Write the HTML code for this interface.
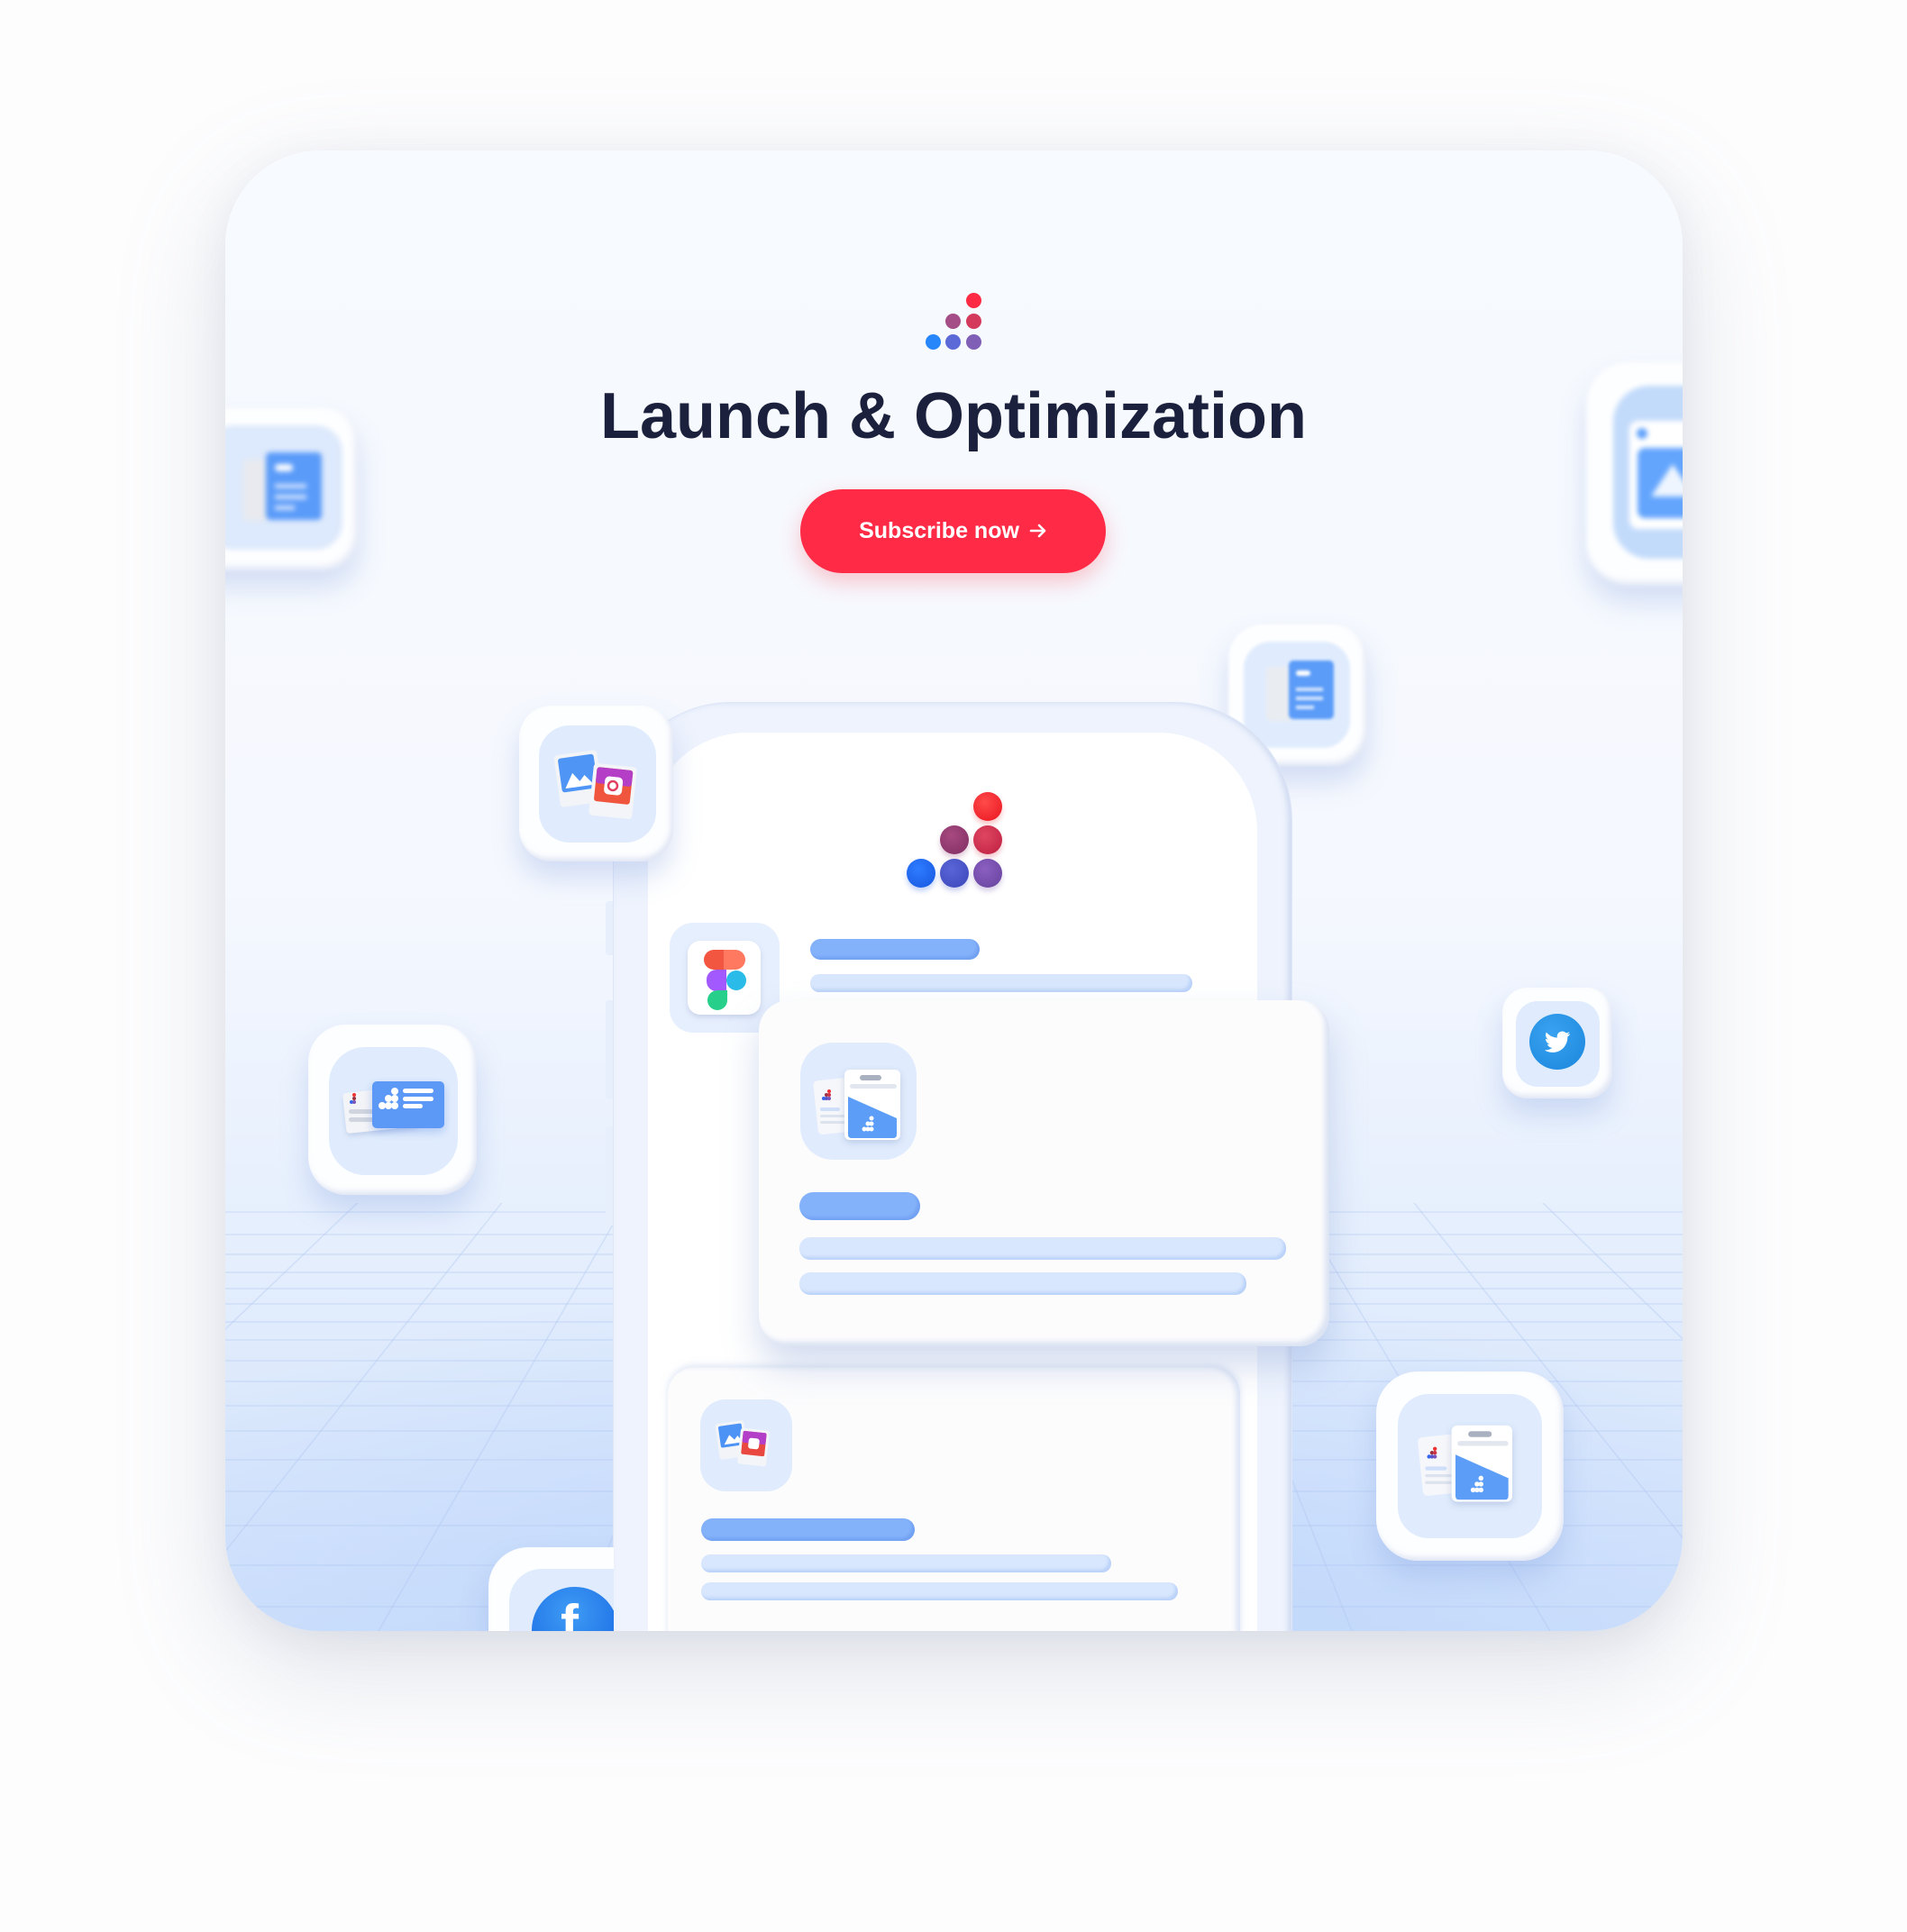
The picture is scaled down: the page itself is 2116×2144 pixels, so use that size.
<!DOCTYPE html>
<html><head><meta charset="utf-8">
<style>
*{margin:0;padding:0;box-sizing:border-box}
html,body{width:2116px;height:2144px;background:#fdfdfe;overflow:hidden;font-family:"Liberation Sans",sans-serif}
.abs{position:absolute}
#card{position:absolute;left:250px;top:167px;width:1617px;height:1643px;border-radius:105px;overflow:hidden;
 background:linear-gradient(180deg,#f7fafe 0%,#f5f8fe 50%,#e4eefd 75%,#cfe0fb 100%);
 box-shadow:0 40px 120px rgba(120,130,160,.22),0 10px 40px rgba(120,130,160,.10)}
#in{position:absolute;left:-250px;top:-167px;width:2116px;height:2144px}
.tile{position:absolute;background:#fdfeff;border-radius:38px;box-shadow:0 18px 30px rgba(120,150,220,.28),inset -3px -4px 6px rgba(200,210,235,.5)}
.inner{position:absolute;background:#e0ecfd;border-radius:30px}
.bar{position:absolute;border-radius:14px;background:#84b2fa;box-shadow:inset -3px -3px 3px rgba(80,130,230,.35)}
.lbar{position:absolute;border-radius:12px;background:#d8e7fd;box-shadow:inset -3px -3px 3px rgba(150,185,245,.45)}
.dot{position:absolute;border-radius:50%}
</style></head><body>
<div id="card"><div id="in">
<!-- grid -->
<svg class="abs" style="left:0;top:0" width="2116" height="2144">
<defs><radialGradient id="g1" cx="0.5" cy="1" r="0.7"><stop offset="0" stop-color="#bcd5fb" stop-opacity=".9"/><stop offset="1" stop-color="#bcd5fb" stop-opacity="0"/></radialGradient>
<clipPath id="cp"><rect x="250" y="1335" width="1617" height="480"/></clipPath></defs>
<rect x="250" y="1250" width="1617" height="560" fill="url(#g1)"/>
<g stroke="#a9c2ee" stroke-opacity=".32" stroke-width="1.6" fill="none" clip-path="url(#cp)">
<line x1="250" y1="1345" x2="1867" y2="1345"/><line x1="250" y1="1370" x2="1867" y2="1370"/><line x1="250" y1="1392" x2="1867" y2="1392"/><line x1="250" y1="1412" x2="1867" y2="1412"/><line x1="250" y1="1430" x2="1867" y2="1430"/><line x1="250" y1="1447" x2="1867" y2="1447"/><line x1="250" y1="1467" x2="1867" y2="1467"/><line x1="250" y1="1487" x2="1867" y2="1487"/><line x1="250" y1="1510" x2="1867" y2="1510"/><line x1="250" y1="1533" x2="1867" y2="1533"/><line x1="250" y1="1560" x2="1867" y2="1560"/><line x1="250" y1="1588" x2="1867" y2="1588"/><line x1="250" y1="1620" x2="1867" y2="1620"/><line x1="250" y1="1655" x2="1867" y2="1655"/><line x1="250" y1="1693" x2="1867" y2="1693"/><line x1="250" y1="1737" x2="1867" y2="1737"/><line x1="250" y1="1783" x2="1867" y2="1783"/>
<line x1="1060" y1="700" x2="-400" y2="1810"/><line x1="1060" y1="700" x2="-100" y2="1810"/><line x1="1060" y1="700" x2="180" y2="1810"/><line x1="1060" y1="700" x2="420" y2="1810"/><line x1="1060" y1="700" x2="640" y2="1810"/>
<line x1="1060" y1="700" x2="2500" y2="1810"/><line x1="1060" y1="700" x2="2200" y2="1810"/><line x1="1060" y1="700" x2="1950" y2="1810"/><line x1="1060" y1="700" x2="1720" y2="1810"/><line x1="1060" y1="700" x2="1500" y2="1810"/>
</g></svg>

<!-- logo -->
<div class="dot" style="left:1072px;top:325px;width:17px;height:17px;background:#ff2b44"></div>
<div class="dot" style="left:1049px;top:348px;width:17px;height:17px;background:#a54d86"></div>
<div class="dot" style="left:1072px;top:348px;width:17px;height:17px;background:#d43a5c"></div>
<div class="dot" style="left:1027px;top:371px;width:17px;height:17px;background:#2886fb"></div>
<div class="dot" style="left:1049px;top:371px;width:17px;height:17px;background:#5c6ad8"></div>
<div class="dot" style="left:1072px;top:371px;width:17px;height:17px;background:#805fb6"></div>

<div class="abs" style="left:558px;top:426px;width:1000px;text-align:center;font-size:72px;line-height:72px;font-weight:bold;color:#1b213d">Launch &amp; Optimization</div>

<div class="abs" style="left:888px;top:543px;width:339px;height:93px;border-radius:47px;background:#ff2b46;box-shadow:0 10px 24px rgba(255,60,80,.28);color:#fff;font-weight:bold;font-size:25px;line-height:93px;text-align:center">Subscribe now <svg width="20" height="20" viewBox="0 0 20 20" style="vertical-align:-2px;margin-left:4px"><path d="M2 10H17M11 4L17 10L11 16" stroke="#fff" stroke-width="2.6" fill="none" stroke-linecap="round" stroke-linejoin="round"/></svg></div>

<!-- blurred top-left tile -->
<div style="filter:blur(3px)">
<div class="tile" style="left:200px;top:453px;width:197px;height:180px"></div>
<div class="inner" style="left:230px;top:472px;width:150px;height:138px;background:#dde9fc"></div>
<div class="abs" style="left:270px;top:510px;width:30px;height:68px;background:#e8eaef;border-radius:5px"></div>
<div class="abs" style="left:295px;top:502px;width:62px;height:75px;background:#5a9bf9;border-radius:5px"></div>
<div class="abs" style="left:305px;top:515px;width:20px;height:8px;background:#fff;border-radius:4px"></div>
<div class="abs" style="left:305px;top:537px;width:35px;height:5px;background:#cfe0fd"></div>
<div class="abs" style="left:305px;top:549px;width:35px;height:5px;background:#cfe0fd"></div>
<div class="abs" style="left:305px;top:561px;width:22px;height:5px;background:#cfe0fd"></div>
</div>
<!-- blurred top-right tile -->
<div style="filter:blur(3px)">
<div class="tile" style="left:1760px;top:402px;width:220px;height:248px;border-radius:48px"></div>
<div class="inner" style="left:1790px;top:428px;width:200px;height:192px;background:#c3dbfb;border-radius:40px"></div>
<div class="abs" style="left:1808px;top:467px;width:120px;height:120px;background:#fff;border-radius:10px"></div>
<div class="dot" style="left:1816px;top:475px;width:12px;height:12px;background:#5fa0fc"></div>
<div class="abs" style="left:1817px;top:497px;width:100px;height:78px;background:#63a5fd;border-radius:8px"></div>
<div class="abs" style="left:1832px;top:515px;width:0;height:0;border-left:24px solid transparent;border-right:24px solid transparent;border-bottom:36px solid #eef5ff"></div>
</div>
<!-- doc tile behind phone -->
<div style="filter:blur(1.5px)">
<div class="tile" style="left:1363px;top:693px;width:154px;height:157px"></div>
<div class="inner" style="left:1380px;top:712px;width:118px;height:118px"></div>
<div class="abs" style="left:1405px;top:740px;width:30px;height:60px;background:#e9ecf1;border-radius:5px"></div>
<div class="abs" style="left:1430px;top:733px;width:50px;height:65px;background:#5b9cf8;border-radius:5px"></div>
<div class="abs" style="left:1438px;top:744px;width:16px;height:6px;background:#fff;border-radius:3px"></div>
<div class="abs" style="left:1438px;top:763px;width:30px;height:4px;background:#d6e6fd"></div>
<div class="abs" style="left:1438px;top:773px;width:30px;height:4px;background:#d6e6fd"></div>
<div class="abs" style="left:1438px;top:783px;width:20px;height:4px;background:#d6e6fd"></div>
</div>

<!-- phone -->
<div class="abs" style="left:672px;top:1000px;width:12px;height:60px;background:#e8effc;border-radius:4px"></div>
<div class="abs" style="left:672px;top:1110px;width:12px;height:110px;background:#e8effc;border-radius:4px"></div>
<div class="abs" style="left:672px;top:1250px;width:12px;height:110px;background:#e8effc;border-radius:4px"></div>
<div class="abs" style="left:681px;top:780px;width:752px;height:1200px;border-radius:130px;background:#eef3fd;box-shadow:0 0 0 1px #dfe7f7,inset -4px 0 6px rgba(190,205,235,.6)"></div>
<div class="abs" style="left:719px;top:813px;width:676px;height:1200px;border-radius:110px 110px 0 0;background:#fff"></div>

<!-- big logo -->
<div class="dot" style="left:1080px;top:879px;width:32px;height:32px;background:radial-gradient(circle at 40% 35%,#ff4a4a,#e8141f);box-shadow:0 4px 6px rgba(230,20,30,.25)"></div>
<div class="dot" style="left:1043px;top:916px;width:32px;height:32px;background:radial-gradient(circle at 40% 35%,#a74a80,#7f2d62);box-shadow:0 4px 6px rgba(130,40,100,.25)"></div>
<div class="dot" style="left:1080px;top:916px;width:32px;height:32px;background:radial-gradient(circle at 40% 35%,#df4561,#bd1f3f);box-shadow:0 4px 6px rgba(200,30,60,.25)"></div>
<div class="dot" style="left:1006px;top:953px;width:32px;height:32px;background:radial-gradient(circle at 40% 35%,#2f7cff,#1456e0);box-shadow:0 4px 6px rgba(20,80,230,.25)"></div>
<div class="dot" style="left:1043px;top:953px;width:32px;height:32px;background:radial-gradient(circle at 40% 35%,#5a66d8,#3b46b8);box-shadow:0 4px 6px rgba(60,70,190,.25)"></div>
<div class="dot" style="left:1080px;top:953px;width:32px;height:32px;background:radial-gradient(circle at 40% 35%,#8a5fc0,#66409c);box-shadow:0 4px 6px rgba(100,60,160,.25)"></div>

<!-- figma row -->
<div class="inner" style="left:743px;top:1024px;width:122px;height:122px;border-radius:26px;background:#e6effd"></div>
<div class="abs" style="left:763px;top:1044px;width:81px;height:82px;border-radius:14px;background:#fff;box-shadow:0 3px 6px rgba(150,160,200,.35)"></div>
<div class="abs" style="left:781px;top:1054px;width:24px;height:22px;border-radius:11px 0 0 11px;background:#f25640"></div>
<div class="abs" style="left:803px;top:1054px;width:24px;height:22px;border-radius:0 11px 11px 0;background:#ff7860"></div>
<div class="abs" style="left:784px;top:1076px;width:22px;height:24px;border-radius:11px 0 0 11px;background:#a259ff"></div>
<div class="dot" style="left:806px;top:1077px;width:22px;height:22px;background:#2bbbe8"></div>
<div class="abs" style="left:785px;top:1099px;width:22px;height:22px;border-radius:11px 0 11px 11px;background:#26d08a"></div>
<div class="bar" style="left:899px;top:1042px;width:188px;height:23px"></div>
<div class="lbar" style="left:899px;top:1081px;width:424px;height:20px"></div>

<!-- bottom card in phone -->
<div class="abs" style="left:741px;top:1517px;width:635px;height:400px;border-radius:30px;background:#fcfcfd;box-shadow:0 -2px 8px rgba(190,205,235,.5),inset -5px 0 6px rgba(215,225,245,.8)"></div>
<div class="inner" style="left:777px;top:1553px;width:102px;height:102px;border-radius:28px"></div>
<svg class="abs" style="left:790px;top:1570px" width="80" height="70" viewBox="0 0 80 70">
<rect x="6" y="8" width="32" height="40" rx="3" fill="#f2f4f8" transform="rotate(-8 22 28)"/>
<rect x="9" y="11" width="26" height="24" rx="2" fill="#4d92f5" transform="rotate(-8 22 28)"/>
<path d="M13 32 L20 22 L25 28 L29 24 L34 32 Z" fill="#fff" transform="rotate(-8 22 28)"/>
<rect x="30" y="16" width="32" height="40" rx="3" fill="#f4f5f8" transform="rotate(6 46 36)"/>
<rect x="33" y="19" width="26" height="26" rx="2" fill="#e8483f" transform="rotate(6 46 36)"/>
<rect x="33" y="19" width="26" height="13" rx="2" fill="#b33fc9" transform="rotate(6 46 36)"/>
<rect x="40" y="26" width="12" height="12" rx="3" fill="#fff" transform="rotate(6 46 36)"/>
</svg>
<div class="bar" style="left:778px;top:1685px;width:237px;height:25px"></div>
<div class="lbar" style="left:778px;top:1725px;width:455px;height:20px"></div>
<div class="lbar" style="left:778px;top:1756px;width:529px;height:20px"></div>

<!-- front card -->
<div class="abs" style="left:842px;top:1110px;width:633px;height:384px;border-radius:34px;background:#fcfcfd;box-shadow:0 22px 40px rgba(130,155,210,.35),inset -5px -5px 6px rgba(210,220,240,.8)"></div>
<div class="inner" style="left:888px;top:1157px;width:129px;height:130px;border-radius:36px"></div>
<svg class="abs" style="left:895px;top:1175px" width="115" height="100" viewBox="0 0 115 100">
<rect x="10" y="22" width="50" height="60" rx="5" fill="#f6f7fa" transform="rotate(-6 35 52)"/>
<circle cx="25" cy="36" r="2" fill="#e33"/><circle cx="22" cy="40" r="2" fill="#934"/><circle cx="25" cy="40" r="2" fill="#c34"/>
<circle cx="19" cy="44" r="2" fill="#36e"/><circle cx="22" cy="44" r="2" fill="#55c"/><circle cx="25" cy="44" r="2" fill="#75b"/>
<rect x="15" y="54" width="22" height="4" rx="2" fill="#cfdffa"/><rect x="15" y="62" width="28" height="3" rx="1.5" fill="#dde3ee"/><rect x="15" y="69" width="28" height="3" rx="1.5" fill="#dde3ee"/>
<rect x="42" y="12" width="62" height="78" rx="6" fill="#fff" style="filter:drop-shadow(0 3px 4px rgba(120,140,190,.35))"/>
<rect x="59" y="18" width="24" height="6" rx="3" fill="#a9b1c0"/>
<rect x="48" y="28" width="52" height="5" rx="2.5" fill="#e2e6ee"/>
<path d="M46 42 L100 66 L100 84 Q100 88 96 88 L50 88 Q46 88 46 84 Z" fill="#5c9df7"/>
<circle cx="72" cy="66" r="2.5" fill="#fff"/><circle cx="68" cy="72" r="2.5" fill="#fff"/><circle cx="72" cy="72" r="2.5" fill="#fff"/><circle cx="64" cy="78" r="2.5" fill="#fff"/><circle cx="68" cy="78" r="2.5" fill="#fff"/><circle cx="72" cy="78" r="2.5" fill="#fff"/>
</svg>
<div class="bar" style="left:887px;top:1323px;width:134px;height:31px;border-radius:16px"></div>
<div class="lbar" style="left:887px;top:1373px;width:540px;height:25px"></div>
<div class="lbar" style="left:887px;top:1412px;width:496px;height:25px"></div>

<!-- instagram tile -->
<div class="tile" style="left:576px;top:783px;width:171px;height:173px;border-radius:36px"></div>
<div class="inner" style="left:598px;top:805px;width:130px;height:130px;border-radius:34px"></div>
<svg class="abs" style="left:612px;top:825px" width="104" height="90" viewBox="0 0 104 90">
<rect x="6" y="10" width="48" height="58" rx="4" fill="#f2f4f8" transform="rotate(-8 30 39)"/>
<rect x="10" y="14" width="40" height="38" rx="3" fill="#4f95f6" transform="rotate(-8 30 39)"/>
<path d="M14 48 L24 32 L31 42 L37 36 L46 48 Z" fill="#fff" transform="rotate(-8 30 39)"/>
<rect x="44" y="24" width="48" height="58" rx="4" fill="#f4f5f8" transform="rotate(6 68 53)"/>
<rect x="48" y="28" width="40" height="38" rx="3" fill="#f0563e" transform="rotate(6 68 53)"/>
<rect x="48" y="28" width="40" height="18" rx="3" fill="#b43ec6" transform="rotate(6 68 53)"/>
<rect x="58" y="37" width="20" height="20" rx="5" fill="#fff" transform="rotate(6 68 53)"/>
<circle cx="68" cy="47" r="5" fill="none" stroke="#e04060" stroke-width="2.5"/>
</svg>

<!-- left business card tile -->
<div class="tile" style="left:342px;top:1137px;width:187px;height:189px;border-radius:42px"></div>
<div class="inner" style="left:365px;top:1162px;width:143px;height:142px;border-radius:40px"></div>
<svg class="abs" style="left:375px;top:1195px" width="125" height="75" viewBox="0 0 125 75">
<rect x="7" y="14" width="80" height="45" rx="4" fill="#f3f4f7" transform="rotate(-6 47 36)" style="filter:drop-shadow(0 3px 3px rgba(120,140,190,.3))"/>
<circle cx="18" cy="20" r="2" fill="#e33"/><circle cx="18" cy="24" r="2" fill="#934"/><circle cx="15" cy="28" r="2" fill="#36e"/><circle cx="18" cy="28" r="2" fill="#75b"/>
<rect x="12" y="36" width="30" height="5" rx="2.5" fill="#cfd4de"/><rect x="12" y="45" width="30" height="5" rx="2.5" fill="#cfd4de"/>
<rect x="38" y="5" width="80" height="52" rx="5" fill="#5c98f5" style="filter:drop-shadow(0 4px 5px rgba(80,130,230,.35))"/>
<circle cx="63" cy="16" r="4" fill="#fff"/><circle cx="56" cy="24" r="4" fill="#fff"/><circle cx="63" cy="24" r="4" fill="#fff"/><circle cx="49" cy="32" r="4" fill="#fff"/><circle cx="56" cy="32" r="4" fill="#fff"/><circle cx="63" cy="32" r="4" fill="#fff"/>
<rect x="72" y="13" width="34" height="5" rx="2.5" fill="#fff"/><rect x="72" y="22" width="34" height="5" rx="2.5" fill="#fff"/><rect x="72" y="30" width="22" height="5" rx="2.5" fill="#fff"/>
</svg>

<!-- twitter tile -->
<div class="tile" style="left:1667px;top:1096px;width:122px;height:123px;border-radius:28px"></div>
<div class="inner" style="left:1682px;top:1111px;width:93px;height:95px;border-radius:24px"></div>
<div class="dot" style="left:1697px;top:1125px;width:62px;height:62px;background:radial-gradient(circle at 40% 35%,#3aa2f0,#1a86dc)"></div>
<svg class="abs" style="left:1711px;top:1139px" width="34" height="34" viewBox="0 0 24 24"><path fill="#fff" d="M22 5.8c-.7.3-1.5.5-2.3.6.8-.5 1.5-1.3 1.8-2.2-.8.5-1.7.8-2.6 1-.8-.8-1.8-1.3-3-1.3-2.3 0-4.1 1.800-4.1 4.1 0 .3 0 .6.1.9C8.5 8.8 5.5 7.1 3.5 4.7c-.4.6-.6 1.3-.6 2.1 0 1.4.7 2.7 1.8 3.4-.7 0-1.3-.2-1.9-.5 0 2 1.4 3.7 3.3 4.1-.6.2-1.3.2-1.900.1.5 1.6 2 2.8 3.9 2.9-1.4 1.1-3.2 1.8-5.1 1.8H2c1.8 1.2 4 1.8 6.3 1.8 7.5 0 11.7-6.2 11.7-11.7v-.5c.8-.6 1.5-1.3 2-2.2z"/></svg>

<!-- bottom right tile -->
<div class="tile" style="left:1527px;top:1522px;width:208px;height:210px;border-radius:46px"></div>
<div class="inner" style="left:1551px;top:1547px;width:160px;height:160px;border-radius:34px"></div>
<svg class="abs" style="left:1565px;top:1568px" width="125" height="110" viewBox="0 0 115 100">
<rect x="10" y="22" width="50" height="60" rx="5" fill="#f6f7fa" transform="rotate(-6 35 52)"/>
<circle cx="25" cy="36" r="2" fill="#e33"/><circle cx="22" cy="40" r="2" fill="#934"/><circle cx="25" cy="40" r="2" fill="#c34"/>
<circle cx="19" cy="44" r="2" fill="#36e"/><circle cx="22" cy="44" r="2" fill="#55c"/><circle cx="25" cy="44" r="2" fill="#75b"/>
<rect x="15" y="54" width="22" height="4" rx="2" fill="#cfdffa"/><rect x="15" y="62" width="28" height="3" rx="1.5" fill="#dde3ee"/><rect x="15" y="69" width="28" height="3" rx="1.5" fill="#dde3ee"/>
<rect x="42" y="12" width="62" height="78" rx="6" fill="#fff" style="filter:drop-shadow(0 3px 4px rgba(120,140,190,.35))"/>
<rect x="59" y="18" width="24" height="6" rx="3" fill="#a9b1c0"/>
<rect x="48" y="28" width="52" height="5" rx="2.5" fill="#e2e6ee"/>
<path d="M46 42 L100 66 L100 84 Q100 88 96 88 L50 88 Q46 88 46 84 Z" fill="#5c9df7"/>
<circle cx="72" cy="66" r="2.5" fill="#fff"/><circle cx="68" cy="72" r="2.5" fill="#fff"/><circle cx="72" cy="72" r="2.5" fill="#fff"/><circle cx="64" cy="78" r="2.5" fill="#fff"/><circle cx="68" cy="78" r="2.5" fill="#fff"/><circle cx="72" cy="78" r="2.5" fill="#fff"/>
</svg>

<!-- facebook tile (behind phone) -->
<div style="position:absolute;left:0;top:0;width:681px;height:2144px;overflow:hidden">
<div class="tile" style="left:542px;top:1717px;width:190px;height:190px;border-radius:44px"></div>
<div class="inner" style="left:565px;top:1741px;width:150px;height:150px;border-radius:36px"></div>
<div class="dot" style="left:590px;top:1761px;width:96px;height:96px;background:radial-gradient(circle at 45% 30%,#3e9cf5,#1260e0)"></div>
<div class="abs" style="left:622px;top:1768px;font-size:60px;font-weight:bold;color:#fff;font-family:'Liberation Sans',sans-serif">f</div>
</div>

</div></div>
</body></html>
